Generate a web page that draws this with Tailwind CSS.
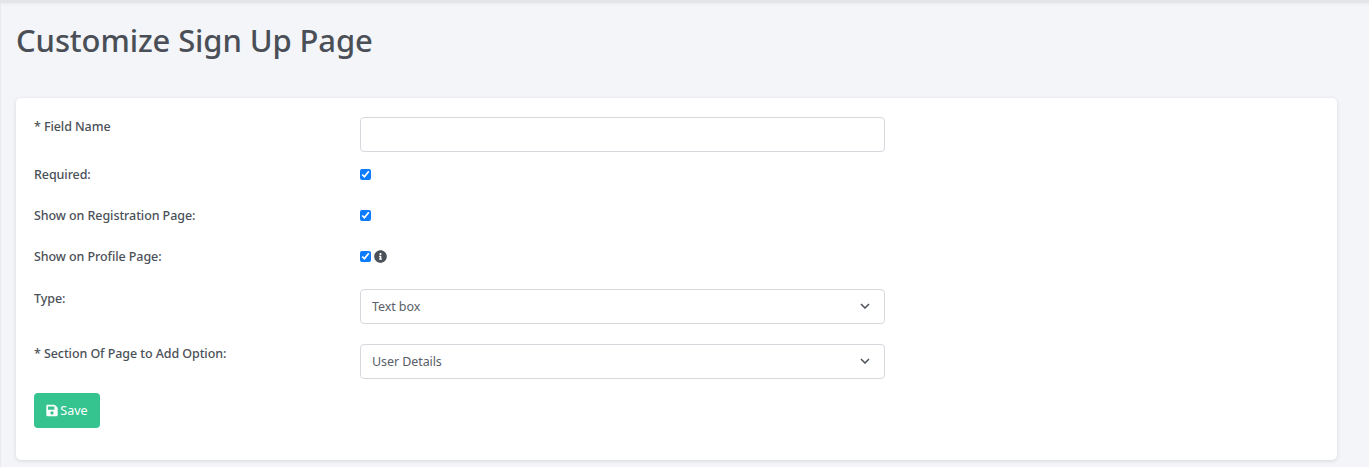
<!DOCTYPE html>
<html lang="en">

<head>
    <meta charset="UTF-8">
    <meta name="viewport" content="width=device-width, initial-scale=1.0">
    <title>Customize Sign Up Page</title>
    <script src="https://cdn.jsdelivr.net/npm/@tailwindcss/browser@4"></script>
</head>

<body class="bg-[#f4f5f8] h-[467px] overflow-hidden font-['Noto_Sans',sans-serif] text-[#4b5158]">
    <div class="h-[3px] bg-[#e4e5e9] shadow-[0_1px_3px_rgba(0,0,0,0.05)]"></div>
    <main class="h-[464px] border-l border-[#e9eaee] pl-[15px] pr-[32px]">
        <h1 class="pt-[15px] h-[95px] text-[31px] leading-[44px] font-medium tracking-[-0.12px] text-[#4a4f57]">Customize Sign Up Page</h1>

        <form class="bg-white rounded-[5px] shadow-[0_1px_4px_rgba(0,0,0,0.12)] h-[362px] pt-[19px] px-[18px]">
            <div class="flex mb-[12px]">
                <label class="w-[326px] text-[12.5px] font-medium leading-[19px] tracking-[-0.08px]">* Field Name</label>
                <input type="text" class="w-[525px] h-[35px] bg-white border border-[#d5d8dd] rounded-[4px] outline-none">
            </div>

            <div class="flex items-center h-[21px] mb-[20px]">
                <label class="w-[326px] mt-[2px] text-[12.5px] font-medium tracking-[-0.08px]">Required:</label>
                <input type="checkbox" checked class="w-[11px] h-[11px] m-0 accent-[#0b7bff]">
            </div>

            <div class="flex items-center h-[21px] mb-[20px]">
                <label class="w-[326px] mt-[2px] text-[12.5px] font-medium tracking-[-0.08px]">Show on Registration Page:</label>
                <input type="checkbox" checked class="w-[11px] h-[11px] m-0 accent-[#0b7bff]">
            </div>

            <div class="flex items-center h-[21px] mb-[22px]">
                <label class="w-[326px] mt-[2px] text-[12.5px] font-medium tracking-[-0.08px]">Show on Profile Page:</label>
                <input type="checkbox" checked class="w-[11px] h-[11px] m-0 accent-[#0b7bff]">
                <svg class="w-[13px] h-[13px] ml-[3px] fill-[#4b5158]" viewBox="0 0 512 512"><path d="M256 8C119.043 8 8 119.083 8 256c0 136.997 111.043 248 248 248s248-111.003 248-248C504 119.083 392.957 8 256 8zm0 110c23.196 0 42 18.804 42 42s-18.804 42-42 42-42-18.804-42-42 18.804-42 42-42zm56 254c0 6.627-5.373 12-12 12h-88c-6.627 0-12-5.373-12-12v-24c0-6.627 5.373-12 12-12h12v-64h-12c-6.627 0-12-5.373-12-12v-24c0-6.627 5.373-12 12-12h64c6.627 0 12 5.373 12 12v100h12c6.627 0 12 5.373 12 12v24z"/></svg>
            </div>

            <div class="flex mb-[20px]">
                <label class="w-[326px] text-[12.5px] font-medium leading-[19px] tracking-[-0.08px]">Type:</label>
                <div class="relative w-[525px]">
                    <select class="appearance-none w-full h-[35px] bg-white border border-[#d5d8dd] rounded-[4px] pl-[11px] pt-[2px] text-[12.5px] tracking-[-0.08px] text-[#596068] outline-none">
                        <option>Text box</option>
                    </select>
                    <svg class="absolute right-[15px] top-[14px] w-[10px] h-[6px] stroke-[#4b5158] fill-none" viewBox="0 0 10 6" stroke-width="1.5"><path d="M1 1l4 4 4-4"/></svg>
                </div>
            </div>

            <div class="flex mb-[14px]">
                <label class="w-[326px] text-[12.5px] font-medium leading-[19px] tracking-[-0.08px]">* Section Of Page to Add Option:</label>
                <div class="relative w-[525px]">
                    <select class="appearance-none w-full h-[35px] bg-white border border-[#d5d8dd] rounded-[4px] pl-[11px] pt-[2px] text-[12.5px] tracking-[-0.08px] text-[#596068] outline-none">
                        <option>User Details</option>
                    </select>
                    <svg class="absolute right-[15px] top-[14px] w-[10px] h-[6px] stroke-[#4b5158] fill-none" viewBox="0 0 10 6" stroke-width="1.5"><path d="M1 1l4 4 4-4"/></svg>
                </div>
            </div>

            <button type="button" class="flex items-center justify-center w-[66px] h-[35px] bg-[#35c38f] rounded-[4px] text-white text-[12.5px] font-normal">
                <svg class="w-[12px] h-[13px] mr-[2px] fill-white" viewBox="0 0 448 512"><path d="M433.941 129.941l-83.882-83.882A48 48 0 0 0 316.118 32H48C21.49 32 0 53.49 0 80v352c0 26.51 21.49 48 48 48h352c26.51 0 48-21.49 48-48V163.882a48 48 0 0 0-14.059-33.941zM224 416c-35.346 0-64-28.654-64-64 0-35.346 28.654-64 64-64s64 28.654 64 64c0 35.346-28.654 64-64 64zm96-304.520V212c0 6.627-5.373 12-12 12H76c-6.627 0-12-5.373-12-12V108c0-6.627 5.373-12 12-12h228.520c3.183 0 6.235 1.264 8.485 3.515l3.480 3.480A11.996 11.996 0 0 1 320 111.480z"/></svg>
                <span class="pt-[1px]">Save</span>
            </button>
        </form>
    </main>
</body>

</html>
